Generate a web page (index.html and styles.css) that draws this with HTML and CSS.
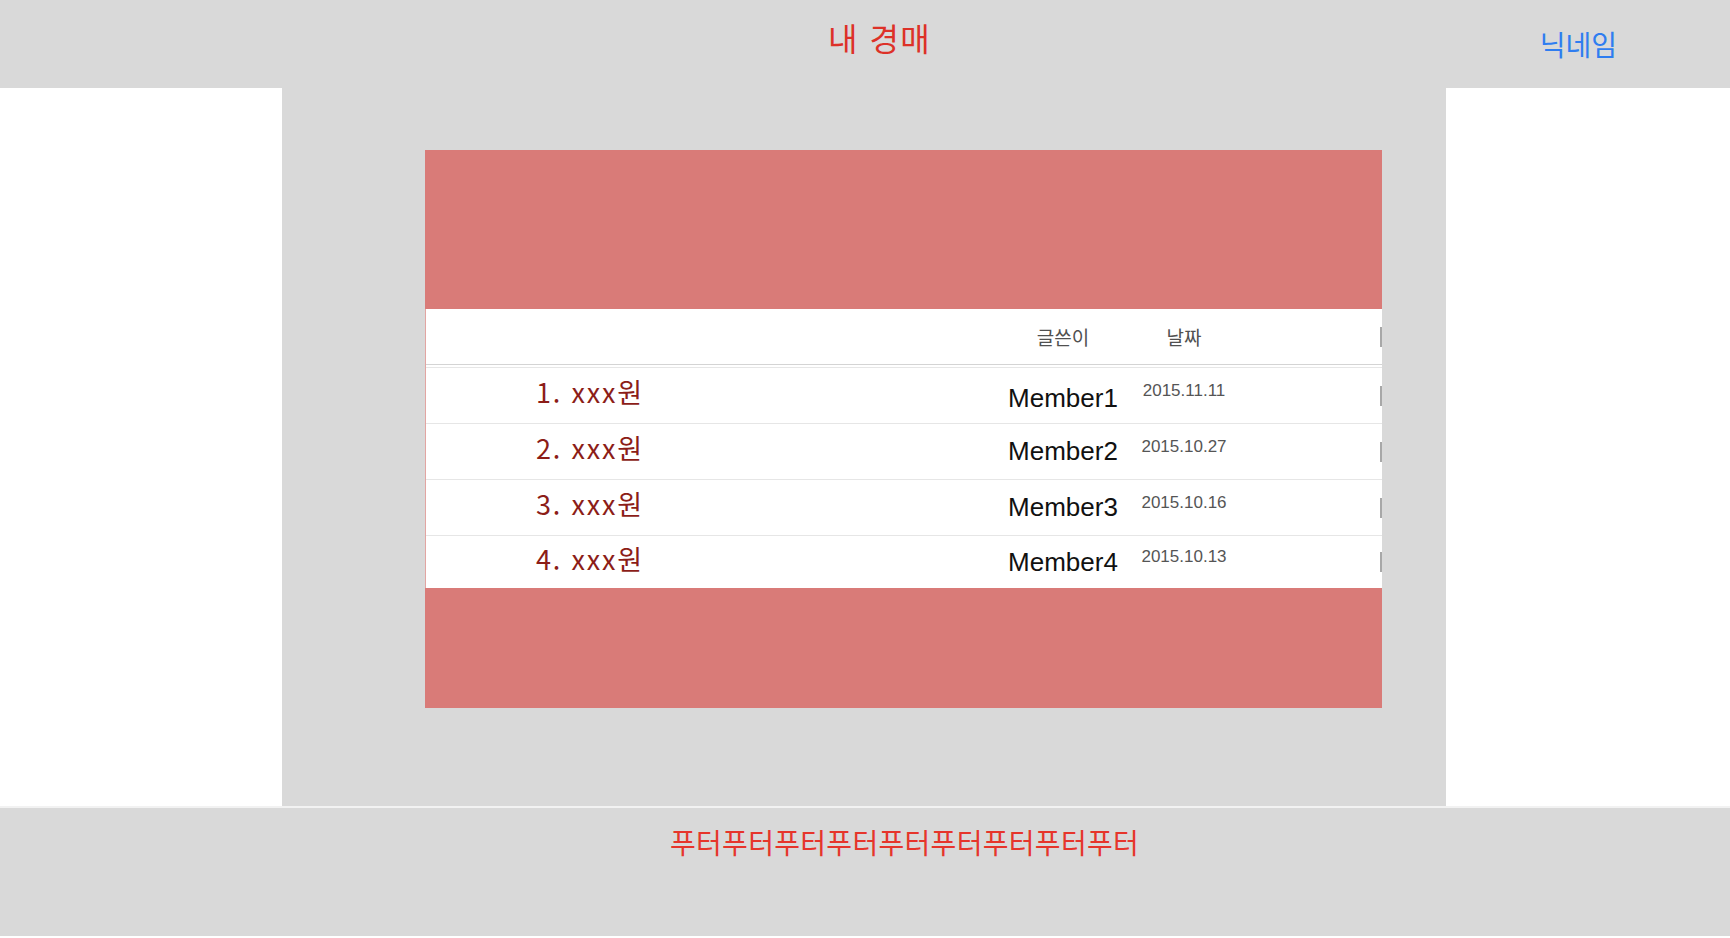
FILE: index.html
```html
<!DOCTYPE html>
<html lang="ko">
<head>
<meta charset="utf-8">
<title>내 경매</title>
<link rel="stylesheet" href="styles.css">
</head>
<body>
<header class="top">
  <h1 class="title">내 경매</h1>
  <a class="nick">닉네임</a>
</header>
<main class="main">
  <div class="side"></div>
  <section class="center">
    <div class="card">
      <div class="band band-top"></div>
      <div class="table">
        <div class="row head">
          <div class="c-title"></div>
          <div class="c-author">글쓴이</div>
          <div class="c-date">날짜</div>
          <div class="c-end"><span class="tick"></span></div>
        </div>
        <div class="gap"></div>
        <div class="row item">
          <div class="c-title">1. xxx원</div>
          <div class="c-author low">Member1</div>
          <div class="c-date">2015.11.11</div>
          <div class="c-end"><span class="tick"></span></div>
        </div>
        <div class="row item">
          <div class="c-title">2. xxx원</div>
          <div class="c-author">Member2</div>
          <div class="c-date">2015.10.27</div>
          <div class="c-end"><span class="tick"></span></div>
        </div>
        <div class="row item">
          <div class="c-title">3. xxx원</div>
          <div class="c-author">Member3</div>
          <div class="c-date">2015.10.16</div>
          <div class="c-end"><span class="tick"></span></div>
        </div>
        <div class="row item last">
          <div class="c-title">4. xxx원</div>
          <div class="c-author">Member4</div>
          <div class="c-date">2015.10.13</div>
          <div class="c-end"><span class="tick"></span></div>
        </div>
      </div>
      <div class="band band-bottom"></div>
    </div>
  </section>
  <div class="side"></div>
</main>
<footer class="foot">
  <p class="foot-text">푸터푸터푸터푸터푸터푸터푸터푸터푸터</p>
</footer>
</body>
</html>
```
FILE: styles.css
```css
* { box-sizing: border-box; }
html, body { margin: 0; padding: 0; }
body {
  width: 1730px;
  height: 938px;
  overflow: hidden;
  background: #ffffff;
  font-family: "Noto Sans CJK KR", "Noto Sans", sans-serif;
}

.top {
  height: 88px;
  background: #d9d9d9;
  display: flex;
  align-items: flex-start;
}
.title {
  margin: 18px 0 0 828px;
  font-size: 32px;
  line-height: 38px;
  letter-spacing: 1.5px;
  font-weight: 400;
  color: #dd3128;
}
.nick {
  margin: 26px 113px 0 auto;
  font-size: 28px;
  line-height: 36px;
  color: #2f7df0;
}

.main {
  height: 720px;
  display: flex;
  border-bottom: 2px solid #f2f2f2;
}
.side {
  width: 282px;
  flex: none;
  background: #ffffff;
}
.side:last-child { width: 284px; }
.center {
  flex: 1;
  background: #d9d9d9;
  padding: 62px 0 0 143px;
}

.card {
  width: 957px;
  display: flex;
  flex-direction: column;
}
.band { background: #d97b78; }
.band-top { height: 159px; }
.band-bottom { height: 120px; }

.table {
  background: #ffffff;
  border-left: 1px solid #e2a5a2;
  height: 279px;
  display: flex;
  flex-direction: column;
}
.row {
  display: grid;
  grid-template-columns: 572px 130px 112px 1fr;
  align-items: center;
}
.head {
  height: 56px;
  border-bottom: 1px solid #d4d4d4;
  font-size: 19px;
  color: #505050;
}
.gap {
  height: 3px;
  border-bottom: 1px solid #e6e6e6;
}
.item {
  height: 56px;
  border-bottom: 1px solid #e6e6e6;
}
.item.last { border-bottom: none; flex: 1; }

.c-title {
  padding-left: 110px;
  font-size: 27px;
  letter-spacing: 1.8px;
  color: #8c1d18;
}
.item .c-title { padding-bottom: 8px; }
.c-author {
  text-align: center;
}
.item .c-author {
  font-family: "Liberation Sans", Arial, sans-serif;
  font-size: 26px;
  color: #111111;
}
.item .c-author.low { padding-top: 6px; }
.c-date {
  text-align: center;
}
.item .c-date {
  font-family: "Liberation Sans", Arial, sans-serif;
  font-size: 17px;
  color: #555555;
  padding-bottom: 10px;
}
.c-end {
  display: flex;
  justify-content: flex-end;
}
.tick {
  width: 2px;
  height: 20px;
  background: #a8a8a8;
}

.foot {
  height: 128px;
  background: #d9d9d9;
  padding-top: 15px;
}
.foot-text {
  margin: 0 0 0 670px;
  font-size: 28px;
  line-height: 38px;
  letter-spacing: 0.3px;
  color: #e6352b;
}
```
